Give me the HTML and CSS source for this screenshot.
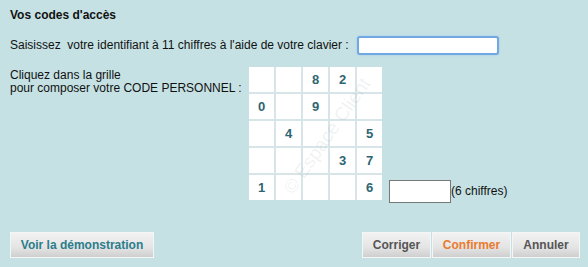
FILE: index.html
```html
<!DOCTYPE html>
<html lang="fr">
<head>
<meta charset="utf-8">
<title>Vos codes d'accès</title>
<link rel="stylesheet" href="styles.css">
</head>
<body>
<div class="panel">
  <h1 class="title">Vos codes d'accès</h1>
  <div class="row-id">
    <span class="label">Saisissez&nbsp; votre identifiant à 11 chiffres à l'aide de votre clavier :</span>
    <input class="id-input" type="text">
  </div>
  <div class="row-grid">
    <div class="label grid-label">Cliquez dans la grille<br>pour composer votre CODE PERSONNEL :</div>
    <div class="grid-wrap">
      <div class="grid">
        <div class="cell"></div><div class="cell"></div><div class="cell">8</div><div class="cell">2</div><div class="cell"></div>
        <div class="cell">0</div><div class="cell"></div><div class="cell">9</div><div class="cell"></div><div class="cell"></div>
        <div class="cell"></div><div class="cell">4</div><div class="cell"></div><div class="cell"></div><div class="cell">5</div>
        <div class="cell"></div><div class="cell"></div><div class="cell"></div><div class="cell">3</div><div class="cell">7</div>
        <div class="cell">1</div><div class="cell"></div><div class="cell"></div><div class="cell"></div><div class="cell">6</div>
      </div>
      <span class="watermark">© Espace Client</span>
    </div>
    <div class="code-box">
      <input class="code-input" type="password">
      <span class="label">(6 chiffres)</span>
    </div>
  </div>
  <div class="actions">
    <button class="btn btn-demo">Voir la démonstration</button>
    <div class="btn-group">
      <button class="btn btn-gray btn-corriger">Corriger</button>
      <button class="btn btn-orange">Confirmer</button>
      <button class="btn btn-gray btn-annuler">Annuler</button>
    </div>
  </div>
</div>
</body>
</html>
```
FILE: styles.css
```css
html, body {
  margin: 0;
  padding: 0;
  background: #c5e1e4;
}
body {
  font-family: "Liberation Sans", Arial, sans-serif;
  font-size: 12px;
  color: #111;
  width: 588px;
  height: 267px;
  overflow: hidden;
}
.panel {
  padding: 8px 8px 0 10px;
}
.title {
  margin: 0;
  font-size: 12px;
  font-weight: bold;
  line-height: 14px;
}
.label {
  font-size: 12px;
  line-height: 13px;
}
.row-id {
  display: flex;
  align-items: center;
  gap: 8px;
  margin-top: 14px;
}
.id-input {
  width: 138px;
  height: 15px;
  padding: 0;
  margin: 0;
  border: 2px solid #72a8e2;
  border-radius: 3px;
  background: #fff;
  box-shadow: 0 0 2px #9fc4ee;
  outline: none;
}
.row-grid {
  display: flex;
  align-items: flex-end;
  margin-top: 12px;
}
.grid-label {
  align-self: flex-start;
  margin-top: 2px;
  width: 239px;
}
.grid-wrap {
  position: relative;
}
.grid {
  display: grid;
  grid-template-columns: repeat(5, 25px);
  grid-auto-rows: 25px;
  gap: 2px;
  background: #d7e5e8;
}
.cell {
  background: #fff;
  display: flex;
  align-items: center;
  justify-content: center;
  font-weight: bold;
  font-size: 13px;
  color: #2e6572;
}
.watermark {
  position: absolute;
  left: 10px;
  top: 58px;
  transform: rotate(-55deg);
  font-size: 19px;
  color: rgba(140, 150, 155, 0.13);
  white-space: nowrap;
  pointer-events: none;
}
.code-box {
  display: flex;
  align-items: center;
  margin-left: 7px;
  margin-bottom: -3px;
}
.code-input {
  padding: 0;
  margin: 0;
  border: 1px solid #777;
  background: #fff;
  box-sizing: border-box;
  width: 62px;
  height: 23px;
}
.actions {
  display: flex;
  justify-content: space-between;
  align-items: center;
  margin-top: 32px;
}
.btn-group {
  display: flex;
  gap: 1px;
}
.btn {
  font-family: "Liberation Sans", Arial, sans-serif;
  font-size: 12px;
  font-weight: bold;
  height: 26px;
  padding: 0;
  margin: 0;
  box-sizing: border-box;
  white-space: nowrap;
  border: 1px solid #f4f6f6;
  background: linear-gradient(#f2f2f2, #e4e4e4 60%, #cfcfcf);
  cursor: pointer;
}
.btn-demo {
  width: 144px;
  color: #2b7d8c;
}
.btn-gray {
  color: #555;
}
.btn-orange {
  color: #ea7a2e;
  width: 79px;
}
.btn-corriger {
  width: 69px;
}
.btn-annuler {
  width: 68px;
}
```
